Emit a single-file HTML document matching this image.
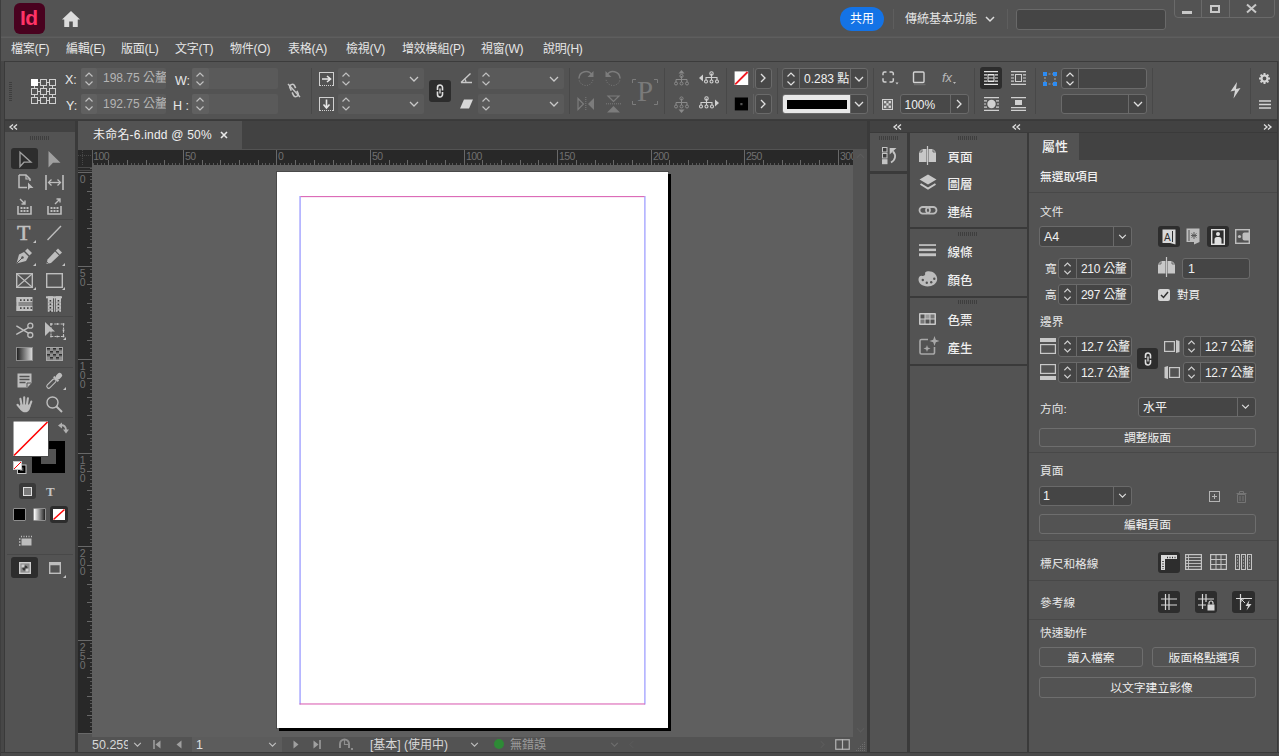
<!DOCTYPE html>
<html lang="zh-Hant"><head><meta charset="utf-8"><title>InDesign</title>
<style>
*{box-sizing:border-box;margin:0;padding:0}
html,body{width:1279px;height:756px;overflow:hidden;background:#535353}
body{position:relative;font-family:"Liberation Sans","Noto Sans CJK TC",sans-serif;font-size:12px;color:#e0e0e0}
.a{position:absolute}
.t{position:absolute;white-space:nowrap;line-height:1}
svg{position:absolute;overflow:visible}
.fld{position:absolute;background:#4a4a4a;border-radius:2px}
.fldb{position:absolute;background:#454545;border:1px solid #6a6a6a;border-radius:3px}
.btn{border:1px solid #6e6e6e;border-radius:3px;background:#535353;color:#f0f0f0;font-size:11.800px;text-align:center;line-height:1;display:flex;align-items:center;justify-content:center;white-space:nowrap;letter-spacing:0;padding-top:3px}
</style></head><body>
<!-- APPBAR -->
<div class="a" id="appbar" style="left:0;top:0;width:1279px;height:37px;background:#535353"></div>
<div class="a" style="left:0;top:36px;width:1279px;height:1px;background:#585858"></div><div class="a" style="left:0;top:37px;width:1279px;height:1px;background:#5e5e5e"></div>
<div class="a" id="logo" style="left:14px;top:3px;width:31px;height:31px;border-radius:6px;background:#49021f"></div>
<div class="t" style="left:20px;top:7px;font-size:21px;font-weight:bold;color:#ff3366;letter-spacing:-0.5px">Id</div>
<svg style="left:62px;top:11px" width="18" height="16" viewBox="0 0 20 16" preserveAspectRatio="none"><path d="M10 0 L0 8.5 L2.5 8.5 L2.5 16 L8 16 L8 10.5 L12 10.5 L12 16 L17.5 16 L17.5 8.5 L20 8.5 Z" fill="#dcdcdc"/></svg>
<div class="a" style="left:840px;top:7px;width:44px;height:24px;border-radius:12px;background:#1473e6"></div>
<div class="t" style="left:850px;top:13px;font-size:12px;color:#fff">共用</div>
<div class="a" style="left:893px;top:9px;width:1px;height:20px;background:#5e5e5e"></div>
<div class="t" style="left:905px;top:13px;font-size:12px;color:#e4e4e4">傳統基本功能</div>
<svg style="left:985px;top:16px" width="10" height="7" viewBox="0 0 10 7"><path d="M1 1 L5 5 L9 1" fill="none" stroke="#ddd" stroke-width="1.5"/></svg>
<div class="a" style="left:1007px;top:9px;width:1px;height:20px;background:#5e5e5e"></div>
<div class="a" style="left:1016px;top:9px;width:150px;height:21px;background:#454545;border:1px solid #696969;border-radius:3px"></div>
<div class="a" id="winbtn" style="left:1174px;top:-2px;width:101px;height:20px;border:1px solid #6a6a6a;border-radius:0 0 4px 4px;background:#535353"></div>
<div class="a" style="left:1201px;top:0;width:1px;height:18px;background:#6a6a6a"></div>
<div class="a" style="left:1229px;top:0;width:1px;height:18px;background:#6a6a6a"></div>
<div class="a" style="left:1182px;top:11px;width:10px;height:3px;background:#c8c8c8"></div>
<div class="a" style="left:1210px;top:5px;width:10px;height:8px;border:2px solid #c8c8c8"></div>
<svg style="left:1246px;top:4px" width="11" height="9" viewBox="0 0 11 9"><path d="M1 0.5 L10 8.5 M10 0.5 L1 8.5" stroke="#c8c8c8" stroke-width="2"/></svg>
<!-- MENUBAR -->
<div class="a" style="left:0;top:38px;width:1279px;height:23px;background:#535353"></div>
<div class="t" style="left:11px;top:43px;font-size:12px;letter-spacing:-0.200px;color:#e6e6e6">檔案(F)</div>
<div class="t" style="left:66px;top:43px;font-size:12px;letter-spacing:-0.200px;color:#e6e6e6">編輯(E)</div>
<div class="t" style="left:121px;top:43px;font-size:12px;letter-spacing:-0.200px;color:#e6e6e6">版面(L)</div>
<div class="t" style="left:175px;top:43px;font-size:12px;letter-spacing:-0.200px;color:#e6e6e6">文字(T)</div>
<div class="t" style="left:230px;top:43px;font-size:12px;letter-spacing:-0.200px;color:#e6e6e6">物件(O)</div>
<div class="t" style="left:288px;top:43px;font-size:12px;letter-spacing:-0.200px;color:#e6e6e6">表格(A)</div>
<div class="t" style="left:346px;top:43px;font-size:12px;letter-spacing:-0.200px;color:#e6e6e6">檢視(V)</div>
<div class="t" style="left:402px;top:43px;font-size:12px;letter-spacing:-0.200px;color:#e6e6e6">增效模組(P)</div>
<div class="t" style="left:481px;top:43px;font-size:12px;letter-spacing:-0.200px;color:#e6e6e6">視窗(W)</div>
<div class="t" style="left:543px;top:43px;font-size:12px;letter-spacing:-0.200px;color:#e6e6e6">說明(H)</div>
<svg width="0" height="0" style="position:absolute"><defs>
<symbol id="spin" viewBox="0 0 10 16"><path d="M1.5 5.5 L5 2 L8.5 5.5 M1.5 10.5 L5 14 L8.5 10.5" fill="none" stroke="currentColor" stroke-width="1.2"/></symbol>
<symbol id="chev" viewBox="0 0 10 6"><path d="M1 1 L5 5 L9 1" fill="none" stroke="currentColor" stroke-width="1.3"/></symbol>
<symbol id="chevr" viewBox="0 0 6 10"><path d="M1 1 L5 5 L1 9" fill="none" stroke="currentColor" stroke-width="1.3"/></symbol>
</defs></svg>
<div class="a" style="left:0;top:61px;width:1279px;height:59px;background:#3c3c3c"></div>
<div class="a" style="left:0;top:61px;width:5px;height:695px;background:#474747"></div>
<div class="a" style="left:4px;top:61px;width:1px;height:695px;background:#3a3a3a"></div>
<div class="a" style="left:5px;top:62px;width:1272px;height:57px;background:#535353"></div>
<div class="a" style="left:1278px;top:61px;width:1px;height:59px;background:#4a4a4a"></div>
<!-- grip -->
<div class="a" style="left:9px;top:82px;width:3px;height:19px;background:repeating-linear-gradient(#3e3e3e 0 1px,transparent 1px 2px)"></div>
<!-- ref point -->
<svg style="left:31px;top:79px;color:#cfcfcf" width="25" height="27" viewBox="0 0 25 27"><g fill="none" stroke="#cfcfcf" stroke-width="1"><path d="M3.5 3.5H21.5M3.5 12.5H21.5M3.5 21.5H21.5M3.5 3.5V21.5M12.5 3.5V21.5M21.5 3.5V21.5"/></g><g fill="#535353" stroke="#cfcfcf" stroke-width="1"><rect x="9.5" y="0.5" width="6" height="6"/><rect x="18.5" y="0.5" width="6" height="6"/><rect x="0.5" y="9.5" width="6" height="6"/><rect x="9.5" y="9.5" width="6" height="6"/><rect x="18.5" y="9.5" width="6" height="6"/><rect x="0.5" y="18.5" width="6" height="6"/><rect x="9.5" y="18.5" width="6" height="6"/><rect x="18.5" y="18.5" width="6" height="6"/></g><rect x="0" y="0" width="7" height="7" fill="#fff"/></svg>
<div class="t" style="left:65px;top:74px;font-size:12.5px;color:#e8e8e8">X:</div>
<div class="t" style="left:66px;top:100px;font-size:12.5px;color:#e8e8e8">Y:</div>
<div class="fld" style="left:81px;top:68px;width:85px;height:21px;background:#5a5a5a"></div>
<div class="fld" style="left:81px;top:68px;width:16px;height:21px;background:#606060"></div>
<svg style="left:84px;top:71px;color:#c0c0c0" width="10" height="16"><use href="#spin"/></svg>
<div class="a" style="left:97px;top:68px;width:69px;height:21px;overflow:hidden;border-radius:0 2px 2px 0"><div class="t" style="left:6px;top:4px;font-size:12px;color:#b4b4b4">198.75 公釐</div></div>
<div class="fld" style="left:81px;top:94px;width:85px;height:20px;background:#5a5a5a"></div>
<div class="fld" style="left:81px;top:94px;width:16px;height:20px;background:#606060"></div>
<svg style="left:84px;top:96px;color:#c0c0c0" width="10" height="16"><use href="#spin"/></svg>
<div class="a" style="left:97px;top:94px;width:69px;height:20px;overflow:hidden;border-radius:0 2px 2px 0"><div class="t" style="left:6px;top:4px;font-size:12px;color:#b4b4b4">192.75 公釐</div></div>
<div class="t" style="left:175px;top:75px;font-size:12.5px;color:#e8e8e8">W:</div>
<div class="t" style="left:173px;top:100px;font-size:12.5px;color:#e8e8e8">H :</div>
<div class="fld" style="left:192px;top:68px;width:86px;height:21px;background:#5a5a5a"></div>
<div class="fld" style="left:192px;top:68px;width:17px;height:21px;background:#606060"></div>
<svg style="left:195px;top:71px;color:#c0c0c0" width="10" height="16"><use href="#spin"/></svg>
<div class="fld" style="left:192px;top:94px;width:86px;height:20px;background:#5a5a5a"></div>
<div class="fld" style="left:192px;top:94px;width:17px;height:20px;background:#606060"></div>
<svg style="left:195px;top:96px;color:#c0c0c0" width="10" height="16"><use href="#spin"/></svg>
<!-- broken chain -->
<svg style="left:287px;top:82px" width="14" height="17" viewBox="0 0 14 17"><g fill="none" stroke="#c6c6c6" stroke-width="1.600" transform="rotate(-25 7 8.500)"><path d="M4.5 7.5 V4.5 a2.5 2.5 0 0 1 5 0 V7"/><path d="M4.5 9.5 V12.5 a2.5 2.5 0 0 0 5 0 V10"/></g><path d="M1 2 L13 15" stroke="#c6c6c6" stroke-width="1.4"/></svg>
<div class="a" style="left:311px;top:68px;width:1px;height:46px;background:#484848"></div>
<!-- x/y scale icons -->
<svg style="left:319px;top:72px" width="15" height="15" viewBox="0 0 15 15"><rect x="0.5" y="0.5" width="14" height="13" fill="none" stroke="#d0d0d0"/><path d="M2 13.5H13" stroke="#535353" stroke-dasharray="1 1"/><path d="M3 7H11M8 4L11.5 7L8 10" fill="none" stroke="#e8e8e8" stroke-width="1.6"/></svg>
<svg style="left:319px;top:97px" width="15" height="15" viewBox="0 0 15 15"><rect x="0.5" y="0.5" width="14" height="13" fill="none" stroke="#d0d0d0"/><path d="M2 13.5H13" stroke="#535353" stroke-dasharray="1 1"/><path d="M7.5 2.5V10.5M4.5 7.5L7.5 11L10.5 7.5" fill="none" stroke="#e8e8e8" stroke-width="1.6"/></svg>
<div class="fld" style="left:338px;top:68px;width:86px;height:21px;background:#5a5a5a"></div>
<svg style="left:341px;top:71px;color:#c0c0c0" width="10" height="16"><use href="#spin"/></svg>
<svg style="left:409px;top:76px;color:#c8c8c8" width="10" height="6"><use href="#chev"/></svg>
<div class="fld" style="left:338px;top:94px;width:86px;height:20px;background:#5a5a5a"></div>
<svg style="left:341px;top:96px;color:#c0c0c0" width="10" height="16"><use href="#spin"/></svg>
<svg style="left:409px;top:101px;color:#c8c8c8" width="10" height="6"><use href="#chev"/></svg>
<!-- chain btn -->
<div class="a" style="left:429px;top:80px;width:22px;height:22px;background:#2d2d2d;border-radius:3px"></div>
<svg style="left:436px;top:84px" width="8" height="14" viewBox="0 0 8 14"><g fill="none" stroke="#e0e0e0" stroke-width="1.6"><path d="M1.5 6 V3.5 a2.5 2.5 0 0 1 5 0 V6.5"/><path d="M1.5 7.5 V10.5 a2.5 2.5 0 0 0 5 0 V8"/><path d="M4 4.5V9.5" stroke-width="1.3"/></g></svg>
<!-- angle / shear -->
<svg style="left:460px;top:72px" width="13" height="12" viewBox="0 0 13 12"><path d="M1 10.5 H12 M1 10.5 L10.5 1.5" fill="none" stroke="#c8c8c8" stroke-width="1.4"/><path d="M6 10.5 A5 5 0 0 0 4.6 7" fill="none" stroke="#c8c8c8" stroke-width="1.2"/></svg>
<svg style="left:460px;top:99px" width="13" height="10" viewBox="0 0 13 10"><path d="M4 0.5 H13 L9 9.5 H0 Z" fill="#d8d8d8"/></svg>
<div class="fld" style="left:478px;top:68px;width:86px;height:21px;background:#5a5a5a"></div>
<svg style="left:481px;top:71px;color:#c0c0c0" width="10" height="16"><use href="#spin"/></svg>
<svg style="left:549px;top:76px;color:#c8c8c8" width="10" height="6"><use href="#chev"/></svg>
<div class="fld" style="left:478px;top:94px;width:86px;height:20px;background:#5a5a5a"></div>
<svg style="left:481px;top:96px;color:#c0c0c0" width="10" height="16"><use href="#spin"/></svg>
<svg style="left:549px;top:101px;color:#c8c8c8" width="10" height="6"><use href="#chev"/></svg>
<div class="a" style="left:569px;top:68px;width:1px;height:46px;background:#484848"></div>
<!-- rotate / flip (disabled) -->
<svg style="left:577px;top:69px" width="18" height="18" viewBox="0 0 18 18"><path d="M2 9 A7 7 0 0 1 15 6" fill="none" stroke="#7c7c7c" stroke-width="1.5"/><path d="M16.5 2 V8 H10.5 Z" fill="#7c7c7c"/><path d="M2 9 A7 7 0 0 0 16 10" fill="none" stroke="#7c7c7c" stroke-width="1" stroke-dasharray="1 1.5"/></svg>
<svg style="left:604px;top:69px" width="18" height="18" viewBox="0 0 18 18"><path d="M16 9 A7 7 0 0 0 3 6" fill="none" stroke="#7c7c7c" stroke-width="1.5"/><path d="M1.5 2 V8 H7.5 Z" fill="#7c7c7c"/><path d="M16 9 A7 7 0 0 1 2 10" fill="none" stroke="#7c7c7c" stroke-width="1" stroke-dasharray="1 1.5"/></svg>
<svg style="left:577px;top:97px" width="18" height="14" viewBox="0 0 18 14"><path d="M1 1.5 L6.5 7 L1 12.5 Z" fill="none" stroke="#7c7c7c" stroke-width="1.2"/><path d="M17 1 L11 7 L17 13 Z" fill="#7c7c7c"/><path d="M8.8 0 V14" stroke="#7c7c7c" stroke-width="1" stroke-dasharray="1 1"/></svg>
<svg style="left:606px;top:95px" width="15" height="18" viewBox="0 0 15 18"><path d="M2 1 L7.5 6.5 L13 1 Z" fill="none" stroke="#7c7c7c" stroke-width="1.2"/><path d="M1 17.5 L7.5 11 L14 17.5 Z" fill="#7c7c7c"/><path d="M0 8.8 H15" stroke="#7c7c7c" stroke-width="1" stroke-dasharray="1 1"/></svg>
<div class="t" style="left:637px;top:77px;font-family:'Liberation Serif',serif;font-size:29px;color:#7a7a7a">P</div>
<svg style="left:632px;top:79px" width="26" height="26" viewBox="0 0 26 26"><path d="M0.5 4V0.5H4M22 0.5H25.5V4M25.5 22V25.5H22M4 25.5H0.5V22" transform="translate(0,0)" fill="none" stroke="#7c7c7c" stroke-width="1"/></svg>
<div class="a" style="left:664px;top:68px;width:1px;height:46px;background:#484848"></div>
<!-- select container icons (disabled) -->
<svg style="left:674px;top:70px" width="15" height="17" viewBox="0 0 15 17"><g fill="none" stroke="#8a8a8a" stroke-width="1"><path d="M7.5 6V9M2 12V9.5H13V12"/><circle cx="7.5" cy="6" r="1.6"/><circle cx="2" cy="13.5" r="1.5"/><circle cx="7.5" cy="13.5" r="1.5"/><circle cx="13" cy="13.5" r="1.5"/><path d="M7.5 9V12"/></g><path d="M4.5 3.5 L7.5 0 L10.5 3.5Z" fill="#8a8a8a"/></svg>
<svg style="left:674px;top:96px" width="15" height="17" viewBox="0 0 15 17"><g fill="none" stroke="#8a8a8a" stroke-width="1"><path d="M7.5 2.5V6M2 9V6.5H13V9"/><circle cx="7.5" cy="2.5" r="1.6"/><circle cx="2" cy="10.5" r="1.5"/><circle cx="7.5" cy="10.5" r="1.5"/><circle cx="13" cy="10.5" r="1.5"/><path d="M7.5 6V9"/></g><path d="M4.5 13.5 L7.5 17 L10.5 13.5Z" fill="#8a8a8a"/></svg>
<svg style="left:699px;top:71px" width="20" height="15" viewBox="0 0 20 15"><g fill="none" stroke="#d0d0d0" stroke-width="1.1"><path d="M12.5 2.5V6M7 9V6.5H18V9"/><circle cx="12.500" cy="2.5" r="1.7"/><circle cx="7" cy="10.500" r="1.500"/><circle cx="12.5" cy="10.5" r="1.5"/><circle cx="18" cy="10.5" r="1.5"/><path d="M12.5 6V9"/></g><path d="M0 7 L4 3.500 V10.5Z" fill="#d0d0d0"/></svg>
<svg style="left:699px;top:96px" width="20" height="15" viewBox="0 0 20 15"><g fill="none" stroke="#d0d0d0" stroke-width="1.1"><path d="M7.5 2.5V6M2 9V6.5H13V9"/><circle cx="7.5" cy="2.500" r="1.700"/><circle cx="2" cy="10.5" r="1.5"/><circle cx="7.5" cy="10.5" r="1.500"/><circle cx="13" cy="10.500" r="1.5"/><path d="M7.5 6V9"/></g><path d="M20 7 L16 3.5 V10.5Z" fill="#d0d0d0"/></svg>
<div class="a" style="left:726px;top:68px;width:1px;height:46px;background:#484848"></div>
<!-- fill / stroke -->
<svg style="left:734px;top:71px" width="15" height="15" viewBox="0 0 15 15"><rect x="0.600" y="0.400" width="13.600" height="13.600" fill="#fff"/><path d="M1.200 13.400L13.600 1" stroke="#f01820" stroke-width="1.800"/></svg>
<svg style="left:734px;top:97px" width="15" height="15" viewBox="0 0 15 15"><rect x="0.800" y="0.500" width="13.200" height="12.900" fill="#000"/><rect x="6.300" y="6" width="2.200" height="2.200" fill="#555"/></svg>
<div class="a" style="left:753px;top:68px;width:1px;height:20px;background:#626262"></div>
<div class="a" style="left:753px;top:94px;width:1px;height:20px;background:#626262"></div>
<div class="a" style="left:755px;top:68px;width:17px;height:21px;background:#484848;border:1px solid #6a6a6a;border-radius:3px"></div>
<svg style="left:760px;top:73px;color:#e0e0e0" width="6" height="10"><use href="#chevr"/></svg>
<div class="a" style="left:755px;top:94px;width:17px;height:20px;background:#484848;border:1px solid #6a6a6a;border-radius:3px"></div>
<svg style="left:760px;top:99px;color:#e0e0e0" width="6" height="10"><use href="#chevr"/></svg>
<div class="a" style="left:777px;top:68px;width:1px;height:46px;background:#484848"></div>
<!-- stroke weight -->
<div class="a" style="left:782px;top:68px;width:86px;height:21px;background:#484848;border:1px solid #6a6a6a;border-radius:3px;overflow:hidden"><div class="a" style="left:16px;top:0;width:1px;height:19px;background:#6a6a6a"></div><div class="a" style="left:67px;top:0;width:1px;height:19px;background:#6a6a6a"></div><div class="a" style="left:17px;top:0;width:50px;height:19px;overflow:hidden"><div class="t" style="left:4px;top:4px;font-size:12px;color:#f0f0f0">0.283 點</div></div></div>
<svg style="left:786px;top:71px;color:#e0e0e0" width="10" height="16"><use href="#spin"/></svg>
<svg style="left:854px;top:76px;color:#e0e0e0" width="10" height="6"><use href="#chev"/></svg>
<!-- stroke style -->
<div class="a" style="left:782px;top:94px;width:86px;height:20px;background:#484848;border:1px solid #6a6a6a;border-radius:3px;overflow:hidden"><div class="a" style="left:0;top:0;width:67px;height:18px;background:#e8e8e8"></div><div class="a" style="left:4px;top:5px;width:60px;height:9px;background:#000"></div><div class="a" style="left:67px;top:0;width:1px;height:18px;background:#6a6a6a"></div></div>
<svg style="left:854px;top:101px;color:#e0e0e0" width="10" height="6"><use href="#chev"/></svg>
<div class="a" style="left:873px;top:68px;width:1px;height:46px;background:#484848"></div>
<!-- effects icons -->
<svg style="left:882px;top:71px" width="17" height="14" viewBox="0 0 17 14"><path d="M4.500 1H2.500A1.500 1.500 0 0 0 1 2.500V4.200M1 7.300V9.500A1.500 1.500 0 0 0 2.500 11H4.500M7.500 11H9.800A1.500 1.500 0 0 0 11.300 9.500V7.300M11.300 4.200V2.500A1.500 1.500 0 0 0 9.800 1H7.500" fill="none" stroke="#d0d0d0" stroke-width="1.500"/><path d="M13.500 11.500h3l-1.500 2z" fill="#d0d0d0"/></svg>
<svg style="left:912px;top:71px" width="14" height="15" viewBox="0 0 14 15"><rect x="1.500" y="1" width="10.500" height="10.500" rx="1" fill="none" stroke="#d4d4d4" stroke-width="1.400"/><path d="M2 13.500H13.500" stroke="#6a6a6a" stroke-width="1.500"/></svg>
<div class="t" style="left:942px;top:71px;font-size:13px;font-style:italic;color:#b8b8b8;font-family:'Liberation Sans',sans-serif">fx</div>
<svg style="left:953px;top:82px" width="3" height="2" viewBox="0 0 3 2"><path d="M0 0H3L1.500 2Z" fill="#b8b8b8"/></svg>
<svg style="left:882px;top:99px" width="11" height="11" viewBox="0 0 11 11"><rect x="0.5" y="0.5" width="10" height="10" fill="#6a6a6a" stroke="#cfcfcf"/><g fill="#d8d8d8"><rect x="2" y="2" width="2.300" height="2.300"/><rect x="6.600" y="2" width="2.300" height="2.300"/><rect x="4.300" y="4.300" width="2.300" height="2.300"/><rect x="2" y="6.600" width="2.300" height="2.300"/><rect x="6.600" y="6.600" width="2.300" height="2.300"/></g></svg>
<div class="a" style="left:900px;top:94px;width:69px;height:20px;background:#484848;border:1px solid #6a6a6a;border-radius:3px"><div class="a" style="left:49px;top:0;width:1px;height:18px;background:#6a6a6a"></div><div class="t" style="left:3.500px;top:4px;font-size:12px;color:#f0f0f0">100%</div></div>
<svg style="left:956px;top:99px;color:#e0e0e0" width="6" height="10"><use href="#chevr"/></svg>
<div class="a" style="left:974px;top:68px;width:1px;height:46px;background:#484848"></div>
<!-- text wrap icons -->
<div class="a" style="left:980px;top:67px;width:22px;height:22px;background:#2d2d2d;border-radius:3px"></div>
<svg style="left:984px;top:71px" width="14" height="14" viewBox="0 0 14 14"><g stroke="#e4e4e4" stroke-width="1.200"><path d="M0 0.600H14M0 3.800H14M0 7H14M0 10.200H14M0 13.400H14"/></g><rect x="3.500" y="3" width="7" height="8" fill="none" stroke="#2d2d2d" stroke-width="1"/><rect x="4" y="3.500" width="6" height="7" fill="none" stroke="#e4e4e4" stroke-width="1"/></svg>
<svg style="left:1011px;top:71px" width="15" height="14" viewBox="0 0 15 14"><g stroke="#d0d0d0" stroke-width="1.200"><path d="M0 0.600H15M0 13.400H15M0 3.800H3M0 7H3M0 10.200H3M12 3.800H15M12 7H15M12 10.200H15"/></g><rect x="4.500" y="3.500" width="6" height="7" fill="none" stroke="#d0d0d0" stroke-width="1"/></svg>
<svg style="left:984px;top:97px" width="15" height="14" viewBox="0 0 15 14"><g stroke="#d0d0d0" stroke-width="1.200"><path d="M0 0.600H15M0 13.400H15M0 3.800H3M0 7H2M0 10.200H3M12 3.800H15M13 7H15M12 10.200H15"/></g><circle cx="7.500" cy="7" r="4.200" fill="#d0d0d0"/></svg>
<svg style="left:1011px;top:97px" width="15" height="14" viewBox="0 0 15 14"><g stroke="#d0d0d0" stroke-width="1.200"><path d="M0 0.600H15M0 10.600H15M0 13.400H15"/></g><rect x="4" y="3" width="7" height="5" fill="#d0d0d0"/></svg>
<div class="a" style="left:1035px;top:68px;width:1px;height:46px;background:#484848"></div>
<!-- corner / blue icon -->
<svg style="left:1043px;top:72px" width="14" height="14" viewBox="0 0 14 14"><rect x="2" y="2" width="10" height="10" fill="none" stroke="#9a9a9a" stroke-width="1.200" stroke-dasharray="2 1.500"/><g fill="#2c8cf4"><rect width="4" height="4"/><rect x="10" width="4" height="4"/><rect y="10" width="4" height="4"/><rect x="10" y="10" width="4" height="4"/></g></svg>
<div class="a" style="left:1061px;top:68px;width:86px;height:21px;background:#454545;border:1px solid #6a6a6a;border-radius:3px"><div class="a" style="left:16px;top:0;width:1px;height:19px;background:#6a6a6a"></div></div>
<svg style="left:1065px;top:71px;color:#e0e0e0" width="10" height="16"><use href="#spin"/></svg>
<div class="a" style="left:1061px;top:94px;width:86px;height:20px;background:#454545;border:1px solid #6a6a6a;border-radius:3px"><div class="a" style="left:66px;top:0;width:1px;height:18px;background:#6a6a6a"></div></div>
<svg style="left:1133px;top:101px;color:#e0e0e0" width="10" height="6"><use href="#chev"/></svg>
<div class="a" style="left:1152px;top:68px;width:1px;height:46px;background:#484848"></div>
<svg style="left:1230px;top:82px" width="11" height="17" viewBox="0 0 11 17"><path d="M7 0 L0.500 9.500 L5 8.500 L3.500 16.500 L10.500 6 L6 7 Z" fill="#d4d4d4"/></svg>
<div class="a" style="left:1250px;top:68px;width:1px;height:46px;background:#484848"></div>
<svg style="left:1259px;top:73px" width="11" height="11" viewBox="0 0 11 11"><circle cx="5.500" cy="5.500" r="3" fill="none" stroke="#d4d4d4" stroke-width="2.200"/><g stroke="#d4d4d4" stroke-width="2"><path d="M5.500 0V2M5.500 9V11M0 5.500H2M9 5.500H11M1.600 1.600L3 3M8 8L9.400 9.400M1.600 9.400L3 8M8 3L9.400 1.600"/></g></svg>
<svg style="left:1259px;top:100px" width="12" height="9" viewBox="0 0 12 9"><path d="M0 1H12M0 4.500H12M0 8H12" stroke="#d4d4d4" stroke-width="1.400"/></svg>
<!-- TOOLS PANEL -->
<div class="a" style="left:5px;top:120px;width:71px;height:633px;background:#535353"></div>
<div class="a" style="left:5px;top:120px;width:71px;height:12px;background:#424242"></div>
<div class="a" style="left:5px;top:120px;width:71px;height:1px;background:#3a3a3a"></div>
<svg style="left:9px;top:124px" width="9" height="6" viewBox="0 0 9 6"><path d="M4 0.500L1 3L4 5.500M8 0.500L5 3L8 5.500" fill="none" stroke="#e0e0e0" stroke-width="1.300"/></svg>
<div class="a" style="left:30px;top:136px;width:20px;height:4px;background:repeating-linear-gradient(90deg,#3e3e3e 0 1px,transparent 1px 2px)"></div>
<!-- selection tools -->
<div class="a" style="left:11px;top:148px;width:27px;height:21px;background:#2d2d2d;border-radius:3px"></div>
<svg style="left:19px;top:151px" width="13" height="17" viewBox="0 0 13 17"><path d="M1 1.200V15.500L5 11.200H12Z" fill="none" stroke="#a0a0a0" stroke-width="1.300" stroke-linejoin="miter"/></svg>
<svg style="left:48px;top:151px" width="13" height="17" viewBox="0 0 13 17"><path d="M0.500 0V16.500L5 11.800H12.500Z" fill="#a0a0a0"/></svg>
<svg style="left:18px;top:174px" width="16" height="17" viewBox="0 0 16 17"><path d="M1 1H8L12 5V7M1 1V13.500H9" fill="none" stroke="#bdbdbd" stroke-width="1.500"/><path d="M8 1V5H12" fill="none" stroke="#bdbdbd" stroke-width="1.200"/><path d="M10 8.500V16L12 14H15.500Z" fill="#bdbdbd"/></svg>
<svg style="left:45px;top:175px" width="19" height="15" viewBox="0 0 19 15"><path d="M1 0V15M18 0V15" stroke="#bdbdbd" stroke-width="1.600"/><path d="M4 7.500H15" stroke="#bdbdbd" stroke-width="1.300"/><path d="M6.500 4.500L3.500 7.500L6.500 10.500M12.500 4.500L15.500 7.500L12.500 10.500" fill="none" stroke="#bdbdbd" stroke-width="1.300"/></svg>
<svg style="left:17px;top:198px" width="15" height="17" viewBox="0 0 15 17"><path d="M1 8V16H14V8" fill="none" stroke="#bdbdbd" stroke-width="1.600"/><g fill="#bdbdbd"><rect x="3.500" y="9" width="2" height="2"/><rect x="6.500" y="9" width="2" height="2"/><rect x="9.500" y="9" width="2" height="2"/><rect x="3.500" y="12" width="2" height="2"/><rect x="6.500" y="12" width="2" height="2"/><rect x="9.500" y="12" width="2" height="2"/></g><path d="M3 1L8 6M8 2.500V6H4.500" fill="none" stroke="#bdbdbd" stroke-width="1.400"/></svg>
<svg style="left:47px;top:198px" width="15" height="17" viewBox="0 0 15 17"><path d="M1 8V16H14V8" fill="none" stroke="#bdbdbd" stroke-width="1.600"/><g fill="#bdbdbd"><rect x="3.500" y="9" width="2" height="2"/><rect x="6.500" y="9" width="2" height="2"/><rect x="9.500" y="9" width="2" height="2"/><rect x="3.500" y="12" width="2" height="2"/><rect x="6.500" y="12" width="2" height="2"/><rect x="9.500" y="12" width="2" height="2"/></g><path d="M8 6L13 1M9.500 1H13V4.500" fill="none" stroke="#bdbdbd" stroke-width="1.400"/></svg>
<div class="a" style="left:7px;top:219px;width:66px;height:1px;background:#484848"></div>
<!-- type / line -->
<div class="t" style="left:17px;top:222px;font-family:'Liberation Serif',serif;font-size:22px;color:#c0c0c0;-webkit-text-stroke:0.500px #c0c0c0">T</div>
<svg style="left:33px;top:240px" width="3" height="3" viewBox="0 0 3 3"><path d="M3 0V3H0Z" fill="#c4c4c4"/></svg>
<svg style="left:47px;top:225px" width="15" height="16" viewBox="0 0 15 16"><path d="M0.500 15L14 1" stroke="#bdbdbd" stroke-width="1.400"/></svg>
<!-- pen / pencil -->
<svg style="left:16px;top:248px" width="17" height="17" viewBox="0 0 17 17"><path d="M11.500 0.500L16 5L13.500 7.500L9 3Z" fill="#bdbdbd"/><path d="M8 4L12.500 8.500L10 13L0.500 15.500L3 6.500Z" fill="#bdbdbd"/><path d="M0.500 15.500L6 10" stroke="#535353" stroke-width="1"/><circle cx="6.500" cy="9.500" r="1.200" fill="#535353"/></svg>
<svg style="left:33px;top:263px" width="3" height="3" viewBox="0 0 3 3"><path d="M3 0V3H0Z" fill="#c4c4c4"/></svg>
<svg style="left:46px;top:248px" width="17" height="17" viewBox="0 0 17 17"><path d="M12 0.500L16 4.500L13.800 6.700L9.800 2.700Z" fill="#bdbdbd"/><path d="M9 3.500L13 7.500L5 15L0.500 16L1.500 11.500Z" fill="#bdbdbd"/><path d="M1 14.200L2.500 15.600" stroke="#535353" stroke-width="1"/></svg>
<svg style="left:62px;top:263px" width="3" height="3" viewBox="0 0 3 3"><path d="M3 0V3H0Z" fill="#c4c4c4"/></svg>
<!-- frames -->
<svg style="left:16px;top:273px" width="17" height="15" viewBox="0 0 17 15"><rect x="0.700" y="0.700" width="15.600" height="13.600" fill="none" stroke="#bdbdbd" stroke-width="1.400"/><path d="M1 1L16 14M16 1L1 14" stroke="#bdbdbd" stroke-width="1.100"/></svg>
<svg style="left:33px;top:287px" width="3" height="3" viewBox="0 0 3 3"><path d="M3 0V3H0Z" fill="#c4c4c4"/></svg>
<svg style="left:46px;top:273px" width="17" height="15" viewBox="0 0 17 15"><rect x="0.700" y="0.700" width="15.600" height="13.600" fill="none" stroke="#bdbdbd" stroke-width="1.400"/></svg>
<svg style="left:62px;top:287px" width="3" height="3" viewBox="0 0 3 3"><path d="M3 0V3H0Z" fill="#c4c4c4"/></svg>
<!-- grids -->
<svg style="left:16px;top:297px" width="17" height="14" viewBox="0 0 17 14"><g fill="#c0c0c0"><rect x="0.500" y="0" width="16" height="5.500"/><rect x="0.500" y="8.500" width="16" height="5.500"/><rect x="0.500" y="0" width="2" height="14"/><rect x="0.500" y="6.500" width="16" height="1"/></g><g fill="#3c3c3c"><rect x="4" y="2.3" width="1.600" height="1.600"/><rect x="7.5" y="2.3" width="1.600" height="1.600"/><rect x="11" y="2.3" width="1.600" height="1.600"/><rect x="14.5" y="2.3" width="1.600" height="1.600"/><rect x="4" y="10.3" width="1.600" height="1.600"/><rect x="7.5" y="10.3" width="1.600" height="1.600"/><rect x="11" y="10.3" width="1.600" height="1.600"/><rect x="14.5" y="10.3" width="1.600" height="1.600"/></g></svg>
<svg style="left:46px;top:296px" width="16" height="16" viewBox="0 0 16 16"><g fill="#c0c0c0"><rect x="0" y="0.300" width="16" height="2"/><rect x="1.800" y="0.300" width="5.200" height="15.500"/><rect x="9.800" y="0.300" width="5.200" height="15.500"/><rect x="8" y="2" width="0.900" height="13.800"/></g><g fill="#3c3c3c"><rect x="3.6" y="4" width="1.600" height="1.600"/><rect x="3.6" y="7.5" width="1.600" height="1.600"/><rect x="3.6" y="11" width="1.600" height="1.600"/><rect x="3.6" y="14.5" width="1.600" height="1.600"/><rect x="11.6" y="4" width="1.600" height="1.600"/><rect x="11.6" y="7.5" width="1.600" height="1.600"/><rect x="11.6" y="11" width="1.600" height="1.600"/><rect x="11.6" y="14.5" width="1.600" height="1.600"/></g><path d="M1.800 6.300H7M1.800 9.800H7M1.800 13.300H7M9.800 6.300H15M9.800 9.800H15M9.800 13.300H15" stroke="#8a8a8a" stroke-width="0.600"/></svg>
<div class="a" style="left:7px;top:316px;width:66px;height:1px;background:#484848"></div>
<!-- scissors / free transform -->
<svg style="left:16px;top:322px" width="18" height="17" viewBox="0 0 18 17"><path d="M0.800 4.200L12 10.800M0.800 12.200L12 5.800" stroke="#bdbdbd" stroke-width="1.500" stroke-linecap="round"/><circle cx="14.300" cy="3.700" r="2.500" fill="none" stroke="#bdbdbd" stroke-width="1.300"/><circle cx="14.300" cy="13" r="2.500" fill="none" stroke="#bdbdbd" stroke-width="1.300"/></svg>
<svg style="left:45px;top:322px" width="21" height="18" viewBox="0 0 21 18"><rect x="6" y="2" width="12.500" height="12.500" fill="none" stroke="#bdbdbd" stroke-width="1.100" stroke-dasharray="2 1.200"/><g fill="#c8c8c8"><rect x="5.200" y="1.200" width="1.600" height="1.600"/><rect x="11.500" y="1.200" width="1.600" height="1.600"/><rect x="17.700" y="1.200" width="1.600" height="1.600"/><rect x="17.700" y="7.500" width="1.600" height="1.600"/><rect x="17.700" y="13.700" width="1.600" height="1.600"/><rect x="11.500" y="13.700" width="1.600" height="1.600"/><rect x="5.200" y="13.700" width="1.600" height="1.600"/></g><path d="M0 0V14L4.500 9.500H10Z" fill="#bdbdbd"/><path d="M21 15V18H18Z" fill="#c4c4c4"/></svg>
<!-- gradient / feather -->
<div class="a" style="left:16px;top:347px;width:17px;height:14px;border:1px solid #8e8e8e;background:linear-gradient(90deg,#222,#d8d8d8)"></div>
<svg style="left:46px;top:347px" width="17" height="14" viewBox="0 0 17 14"><defs><linearGradient id="gf" x1="0" y1="0" x2="0" y2="1"><stop offset="0" stop-color="#1c1c1c"/><stop offset="1" stop-color="#8a8a8a"/></linearGradient></defs><rect x="0.500" y="0.500" width="16" height="13" fill="#8e8e8e" stroke="#a8a8a8"/><g fill="url(#gf)"><rect x="1" y="1" width="3" height="3"/><rect x="7" y="1" width="3" height="3"/><rect x="13" y="1" width="3" height="3"/><rect x="4" y="4" width="3" height="3"/><rect x="10" y="4" width="3" height="3"/><rect x="1" y="7" width="3" height="3"/><rect x="7" y="7" width="3" height="3"/><rect x="13" y="7" width="3" height="3"/><rect x="4" y="10" width="3" height="3"/><rect x="10" y="10" width="3" height="3"/></g></svg>
<div class="a" style="left:7px;top:367px;width:66px;height:1px;background:#484848"></div>
<!-- note / eyedropper -->
<svg style="left:17px;top:373px" width="15" height="15" viewBox="0 0 15 15"><path d="M0.500 0.500H14.500V10L10.500 14.500H0.500Z" fill="#bdbdbd"/><path d="M2.500 3.500H12.500M2.500 6.500H12.500M2.500 9.500H8.500" stroke="#535353" stroke-width="1.300"/><path d="M10 14V10H14" fill="none" stroke="#535353" stroke-width="1"/></svg>
<svg style="left:46px;top:372px" width="17" height="18" viewBox="0 0 17 18"><g transform="translate(5.600,11.400) rotate(45)"><rect x="-1.900" y="-5.500" width="3.800" height="11.500" rx="1.900" fill="none" stroke="#bdbdbd" stroke-width="1.100"/><rect x="-3.300" y="-7.300" width="6.600" height="2" fill="#bdbdbd"/><rect x="-2.500" y="-13.800" width="5" height="7" rx="2.300" fill="#bdbdbd"/></g></svg>
<svg style="left:63px;top:387px" width="3" height="3" viewBox="0 0 3 3"><path d="M3 0V3H0Z" fill="#c4c4c4"/></svg>
<!-- hand / zoom -->
<svg style="left:16px;top:396px" width="17" height="17" viewBox="16 396 17 17"><g stroke="#bdbdbd" stroke-width="2.100" stroke-linecap="round" fill="none"><path d="M21.600 405L20.400 398.800M24.200 404.500V397.300M26.900 405L27.900 398.200M29.300 407L31.300 401.600M21.500 409.500L17.500 404.800"/></g><path d="M20 404.500H30.300C30.800 409 28.800 412.300 25 412.300C21.500 412.300 20 409.500 20 404.500Z" fill="#bdbdbd"/></svg>
<svg style="left:46px;top:396px" width="17" height="17" viewBox="0 0 17 17"><circle cx="6.500" cy="6.500" r="5.500" fill="none" stroke="#bdbdbd" stroke-width="1.400"/><path d="M10.500 10.500L16 16" stroke="#bdbdbd" stroke-width="2"/></svg>
<div class="a" style="left:7px;top:417px;width:66px;height:1px;background:#484848"></div>
<!-- fill/stroke -->
<div class="a" style="left:32px;top:441px;width:33px;height:32px;background:#000"></div>
<div class="a" style="left:41px;top:449px;width:15px;height:15px;background:#535353"></div>
<svg style="left:13px;top:421px" width="36" height="36" viewBox="0 0 36 36"><rect width="36" height="36" fill="#4a4a4a"/><rect x="0.500" y="0.500" width="34.500" height="34.500" fill="#fff"/><path d="M1 34.500L34.500 1" stroke="#f00" stroke-width="1.600"/></svg>
<svg style="left:58px;top:422px" width="11" height="12" viewBox="0 0 11 12"><path d="M2.500 3.500C6 2.500 8 5 8 8" fill="none" stroke="#b0b0b0" stroke-width="1.800"/><path d="M0 3.500L4 0.500V6.500Z" fill="#b0b0b0"/><path d="M5 7.500H11L8 11.500Z" fill="#b0b0b0"/></svg>
<svg style="left:13px;top:461px" width="14" height="13" viewBox="0 0 14 13"><rect x="4.500" y="4" width="8.500" height="8.500" fill="#000" stroke="#c8c8c8" stroke-width="1"/><rect x="7" y="6.500" width="3.500" height="3.500" fill="#535353"/><rect x="0.500" y="0.500" width="8" height="8" fill="#fff" stroke="#c8c8c8"/><path d="M1 8L8 1" stroke="#f00" stroke-width="1"/></svg>
<!-- container / text -->
<div class="a" style="left:19px;top:483px;width:17px;height:16px;background:#3a3a3a;border-radius:3px"></div>
<div class="a" style="left:23px;top:487px;width:9px;height:9px;border:1px solid #e0e0e0;background:#7a7a7a"></div>
<div class="t" style="left:46px;top:485px;font-family:'Liberation Serif',serif;font-weight:bold;font-size:13px;color:#c4c4c4">T</div>
<!-- apply color row -->
<div class="a" style="left:13px;top:508px;width:13px;height:13px;background:#000;border:1px solid #8e8e8e;border-radius:1px"></div>
<div class="a" style="left:33px;top:508px;width:13px;height:13px;background:linear-gradient(90deg,#fff,#222);border:1px solid #8e8e8e;border-radius:1px"></div>
<div class="a" style="left:50px;top:506px;width:18px;height:17px;background:#2d2d2d;border-radius:3px"></div>
<svg style="left:53px;top:509px" width="12" height="11" viewBox="0 0 12 11"><rect width="12" height="11" fill="#fff"/><path d="M0.500 10.500L11.500 0.500" stroke="#f00" stroke-width="1.500"/></svg>
<!-- view options -->
<svg style="left:18px;top:535px" width="14" height="11" viewBox="0 0 14 11"><rect x="3.500" y="3.500" width="10" height="7" fill="#bdbdbd"/><path d="M3 1.500H14" stroke="#bdbdbd" stroke-width="1.500" stroke-dasharray="1 1.500"/><path d="M1 4H2.500M1 7H2.500M1 10H2.500" stroke="#bdbdbd" stroke-width="1.400"/></svg>
<div class="a" style="left:7px;top:554px;width:66px;height:1px;background:#484848"></div>
<div class="a" style="left:11px;top:557px;width:27px;height:21px;background:#2d2d2d;border-radius:3px"></div>
<svg style="left:19px;top:562px" width="12" height="12" viewBox="0 0 12 12"><rect x="0.700" y="0.700" width="10.600" height="10.600" fill="#8a8a8a" stroke="#cfcfcf" stroke-width="1.400"/><circle cx="6" cy="6" r="2.600" fill="#3a3a3a"/><rect x="2.500" y="2.500" width="3" height="3" fill="#cfcfcf"/><rect x="6.500" y="6.500" width="3" height="3" fill="#cfcfcf"/></svg>
<svg style="left:49px;top:562px" width="12" height="12" viewBox="0 0 12 12"><rect x="0.700" y="0.700" width="10.600" height="10.600" fill="none" stroke="#bdbdbd" stroke-width="1.400"/><path d="M0 2H12" stroke="#bdbdbd" stroke-width="2.500"/></svg>
<svg style="left:63px;top:575px" width="3" height="3" viewBox="0 0 3 3"><path d="M3 0V3H0Z" fill="#c4c4c4"/></svg>
<!-- DOC WINDOW -->
<div class="a" style="left:75px;top:120px;width:795px;height:633px;background:#3a3a3a"></div>
<div class="a" style="left:78px;top:121px;width:789px;height:29px;background:#424242"></div>
<div class="a" style="left:78px;top:121px;width:164px;height:29px;background:#535353"></div>
<div class="t" style="left:93px;top:129px;font-size:12px;color:#f0f0f0;letter-spacing:0.200px">未命名-6.indd @ 50%</div>
<svg style="left:220px;top:131px" width="8" height="8" viewBox="0 0 8 8"><path d="M1 1L7 7M7 1L1 7" stroke="#e8e8e8" stroke-width="1.600"/></svg>
<div class="a" style="left:78px;top:149px;width:789px;height:604px;background:#535353"></div>
<div class="a" style="left:92px;top:165px;width:761px;height:572px;background:#5f5f5f"></div>
<div class="a" style="left:78px;top:150px;width:775px;height:15px;background:#282828"></div>
<div class="a" style="left:78px;top:150px;width:14px;height:584px;background:#282828"></div>
<svg style="left:93px;top:149px" width="760" height="16" viewBox="93 149 760 16"><path d="M93.5 163V165M97.5 163V165M101.5 163V165M104.5 163V165M112.5 163V165M116.5 163V165M119.5 163V165M123.5 163V165M131.5 163V165M134.5 163V165M138.5 163V165M142.5 163V165M149.5 163V165M153.5 163V165M157.5 163V165M160.5 163V165M168.5 163V165M172.5 163V165M175.5 163V165M179.5 163V165M187.5 163V165M190.5 163V165M194.5 163V165M198.5 163V165M205.5 163V165M209.5 163V165M213.5 163V165M217.5 163V165M224.5 163V165M228.5 163V165M232.5 163V165M235.5 163V165M243.5 163V165M247.5 163V165M250.5 163V165M254.5 163V165M262.5 163V165M265.5 163V165M269.5 163V165M273.5 163V165M280.5 163V165M284.5 163V165M288.5 163V165M291.5 163V165M299.5 163V165M303.5 163V165M306.5 163V165M310.5 163V165M318.5 163V165M321.5 163V165M325.5 163V165M329.5 163V165M336.5 163V165M340.5 163V165M344.5 163V165M348.5 163V165M355.5 163V165M359.5 163V165M363.5 163V165M366.5 163V165M374.5 163V165M378.5 163V165M381.5 163V165M385.5 163V165M393.5 163V165M396.5 163V165M400.5 163V165M404.5 163V165M411.5 163V165M415.5 163V165M419.5 163V165M422.5 163V165M430.5 163V165M434.5 163V165M437.5 163V165M441.5 163V165M449.5 163V165M452.5 163V165M456.5 163V165M460.5 163V165M467.5 163V165M471.5 163V165M475.5 163V165M479.5 163V165M486.5 163V165M490.5 163V165M494.5 163V165M497.5 163V165M505.5 163V165M509.5 163V165M512.5 163V165M516.5 163V165M523.5 163V165M527.5 163V165M531.5 163V165M535.5 163V165M542.5 163V165M546.5 163V165M550.5 163V165M553.5 163V165M561.5 163V165M565.5 163V165M568.5 163V165M572.5 163V165M580.5 163V165M583.5 163V165M587.5 163V165M591.5 163V165M598.5 163V165M602.5 163V165M606.5 163V165M610.5 163V165M617.5 163V165M621.5 163V165M625.5 163V165M628.5 163V165M636.5 163V165M639.5 163V165M643.5 163V165M647.5 163V165M654.5 163V165M658.5 163V165M662.5 163V165M666.5 163V165M673.5 163V165M677.5 163V165M681.5 163V165M684.5 163V165M692.5 163V165M696.5 163V165M699.5 163V165M703.5 163V165M711.5 163V165M714.5 163V165M718.5 163V165M722.5 163V165M729.5 163V165M733.5 163V165M737.5 163V165M741.5 163V165M748.5 163V165M752.5 163V165M755.5 163V165M759.5 163V165M767.5 163V165M770.5 163V165M774.5 163V165M778.5 163V165M785.5 163V165M789.5 163V165M793.5 163V165M797.5 163V165M804.5 163V165M808.5 163V165M812.5 163V165M815.5 163V165M823.5 163V165M827.5 163V165M830.5 163V165M834.5 163V165M842.5 163V165M845.5 163V165M849.5 163V165M853.5 163V165" stroke="#585858" stroke-width="1"/><path d="M108.5 160V165M127.5 160V165M146.5 160V165M164.5 160V165M202.5 160V165M220.5 160V165M239.5 160V165M258.5 160V165M295.5 160V165M314.5 160V165M333.5 160V165M351.5 160V165M389.5 160V165M407.5 160V165M426.5 160V165M445.5 160V165M482.5 160V165M501.5 160V165M520.5 160V165M538.5 160V165M576.5 160V165M595.5 160V165M613.5 160V165M632.5 160V165M669.5 160V165M688.5 160V165M707.5 160V165M726.5 160V165M763.5 160V165M782.5 160V165M800.5 160V165M819.5 160V165" stroke="#686868" stroke-width="1"/><path d="M183.5 150V165M276.5 150V165M370.5 150V165M464.5 150V165M557.5 150V165M651.5 150V165M744.5 150V165M838.5 150V165" stroke="#686868" stroke-width="1"/><g font-family="Liberation Sans, sans-serif" font-size="10.500" fill="#707070" letter-spacing="-0.600"><text x="93.2" y="159.800">100</text><text x="185.0" y="159.800">50</text><text x="278.0" y="159.800">0</text><text x="372.0" y="159.800">50</text><text x="466.0" y="159.800">100</text><text x="559.0" y="159.800">150</text><text x="653.0" y="159.800">200</text><text x="746.0" y="159.800">250</text><text x="840.0" y="159.800">300</text></g></svg>
<svg style="left:78px;top:165px" width="14" height="569" viewBox="78 165 14 569"><path d="M90 168.5H92M90 176.5H92M90 179.5H92M90 183.5H92M90 187.5H92M90 194.5H92M90 198.5H92M90 202.5H92M90 206.5H92M90 213.5H92M90 217.5H92M90 221.5H92M90 224.5H92M90 232.5H92M90 236.5H92M90 239.5H92M90 243.5H92M90 251.5H92M90 254.5H92M90 258.5H92M90 262.5H92M90 269.5H92M90 273.5H92M90 277.5H92M90 281.5H92M90 288.5H92M90 292.5H92M90 295.5H92M90 299.5H92M90 307.5H92M90 310.5H92M90 314.5H92M90 318.5H92M90 325.5H92M90 329.5H92M90 333.5H92M90 337.5H92M90 344.5H92M90 348.5H92M90 352.5H92M90 355.5H92M90 363.5H92M90 367.5H92M90 370.5H92M90 374.5H92M90 382.5H92M90 385.5H92M90 389.5H92M90 393.5H92M90 400.5H92M90 404.5H92M90 408.5H92M90 411.5H92M90 419.5H92M90 423.5H92M90 426.5H92M90 430.5H92M90 438.5H92M90 441.5H92M90 445.5H92M90 449.5H92M90 456.5H92M90 460.5H92M90 464.5H92M90 468.5H92M90 475.5H92M90 479.5H92M90 483.5H92M90 486.5H92M90 494.5H92M90 498.5H92M90 501.5H92M90 505.5H92M90 513.5H92M90 516.5H92M90 520.5H92M90 524.5H92M90 531.5H92M90 535.5H92M90 539.5H92M90 542.5H92M90 550.5H92M90 554.5H92M90 557.5H92M90 561.5H92M90 569.5H92M90 572.5H92M90 576.5H92M90 580.5H92M90 587.5H92M90 591.5H92M90 595.5H92M90 599.5H92M90 606.5H92M90 610.5H92M90 614.5H92M90 617.5H92M90 625.5H92M90 629.5H92M90 632.5H92M90 636.5H92M90 643.5H92M90 647.5H92M90 651.5H92M90 655.5H92M90 662.5H92M90 666.5H92M90 670.5H92M90 673.5H92M90 681.5H92M90 685.5H92M90 688.5H92M90 692.5H92M90 700.5H92M90 703.5H92M90 707.5H92M90 711.5H92M90 718.5H92M90 722.5H92M90 726.5H92M90 730.5H92" stroke="#585858" stroke-width="1"/><path d="M87 191.5H92M87 209.5H92M87 228.5H92M87 247.5H92M87 284.5H92M87 303.5H92M87 322.5H92M87 340.5H92M87 378.5H92M87 397.5H92M87 415.5H92M87 434.5H92M87 471.5H92M87 490.5H92M87 509.5H92M87 527.5H92M87 565.5H92M87 584.5H92M87 602.5H92M87 621.5H92M87 658.5H92M87 677.5H92M87 696.5H92M87 715.5H92" stroke="#686868" stroke-width="1"/><path d="M78 172.5H92M78 266.5H92M78 359.5H92M78 453.5H92M78 546.5H92M78 640.5H92M78 733.5H92" stroke="#686868" stroke-width="1"/><g font-family="Liberation Sans, sans-serif" font-size="10.500" fill="#707070" letter-spacing="-0.600"><text x="79.800" y="182.8">0</text><text x="79.800" y="276.8">5</text><text x="79.800" y="286.0">0</text><text x="79.800" y="369.8">1</text><text x="79.800" y="379.0">0</text><text x="79.800" y="388.2">0</text><text x="79.800" y="463.8">1</text><text x="79.800" y="473.0">5</text><text x="79.800" y="482.2">0</text><text x="79.800" y="556.8">2</text><text x="79.800" y="566.0">0</text><text x="79.800" y="575.2">0</text><text x="79.800" y="650.8">2</text><text x="79.800" y="660.0">5</text><text x="79.800" y="669.2">0</text></g></svg>
<div class="a" style="left:78px;top:167px;width:14px;height:1px;background:#484848"></div><div class="a" style="left:78px;top:170px;width:14px;height:1px;background:#484848"></div>
<div class="a" style="left:78px;top:150px;width:14px;height:15px;background:#282828"></div>
<svg style="left:78px;top:150px" width="15" height="15" viewBox="0 0 15 15"><path d="M4.500 0V15M0 5.500H14" stroke="#484848" stroke-width="1" stroke-dasharray="1 1"/><path d="M14.500 0V15" stroke="#606060" stroke-width="1"/></svg>
<div class="a" style="left:279px;top:174px;width:391.500px;height:556.500px;background:#000"></div>
<div class="a" style="left:277px;top:172px;width:391px;height:556px;background:#fff"></div>
<svg style="left:277px;top:172px" width="391" height="556" viewBox="277 172 391 556"><rect x="299.200" y="196" width="1.800" height="508.500" fill="#b6b6ff"/><rect x="644" y="196" width="1.700" height="508.500" fill="#b6b6ff"/><rect x="300.500" y="196" width="344" height="1.150" fill="#dc6cb8"/><rect x="299.500" y="703.400" width="345.500" height="1.150" fill="#dc6cb8"/></svg>
<div class="a" style="left:276px;top:171px;width:393px;height:1px;background:#4a4a4a"></div>
<div class="a" style="left:276px;top:171px;width:1px;height:558px;background:#4a4a4a"></div>
<div class="a" style="left:853px;top:149px;width:14px;height:588px;background:#535353"></div>
<svg style="left:856px;top:153px;color:#5b5b5b" width="9" height="6" viewBox="0 0 10 6"><path d="M1 5L5 1L9 5" fill="none" stroke="currentColor" stroke-width="1.2"/></svg>
<svg style="left:856px;top:727px;color:#5b5b5b" width="9" height="6"><use href="#chev"/></svg>
<div class="a" style="left:78px;top:737px;width:789px;height:16px;background:#535353"></div>
<div class="a" style="left:92px;top:737px;width:36px;height:16px;overflow:hidden"><div class="t" style="left:0;top:2px;font-size:12.500px;color:#d8d8d8">50.259%</div></div>
<svg style="left:133px;top:742px;color:#c0c0c0" width="9" height="5"><use href="#chev"/></svg>
<svg style="left:153px;top:740px" width="8" height="9" viewBox="0 0 8 9"><path d="M1 0V9" stroke="#a0a0a0" stroke-width="1.500"/><path d="M7.500 0.500V8.500L2.500 4.500Z" fill="#a0a0a0"/></svg>
<svg style="left:176px;top:740px" width="6" height="9" viewBox="0 0 6 9"><path d="M5.500 0.500V8.500L0.500 4.500Z" fill="#a0a0a0"/></svg>
<div class="a" style="left:192px;top:737px;width:90px;height:16px;background:#5c5c5c"></div>
<div class="t" style="left:196px;top:739px;font-size:12.500px;color:#e0e0e0">1</div>
<svg style="left:268px;top:742px;color:#c0c0c0" width="9" height="5"><use href="#chev"/></svg>
<svg style="left:293px;top:740px" width="6" height="9" viewBox="0 0 6 9"><path d="M0.500 0.500V8.500L5.500 4.500Z" fill="#a0a0a0"/></svg>
<svg style="left:313px;top:740px" width="8" height="9" viewBox="0 0 8 9"><path d="M7 0V9" stroke="#a0a0a0" stroke-width="1.500"/><path d="M0.500 0.500V8.500L5.500 4.500Z" fill="#a0a0a0"/></svg>
<svg style="left:338px;top:738px" width="16" height="13" viewBox="0 0 16 13"><path d="M2 10V6A4.500 4.500 0 0 1 11 6V10" fill="none" stroke="#8e8e8e" stroke-width="2"/><path d="M6.500 2V6.500H10" fill="none" stroke="#8e8e8e" stroke-width="1.200"/><rect x="13" y="10" width="2" height="2" fill="#8e8e8e"/></svg>
<div class="t" style="left:370px;top:739px;font-size:12px;color:#d8d8d8">[基本] (使用中)</div>
<svg style="left:470px;top:742px;color:#c0c0c0" width="9" height="5"><use href="#chev"/></svg>
<div class="a" style="left:494px;top:739px;width:10px;height:10px;border-radius:5px;background:#2e8a36"></div>
<div class="t" style="left:510px;top:739px;font-size:12px;color:#9c9c9c">無錯誤</div>
<svg style="left:610px;top:742px;color:#6e6e6e" width="9" height="5"><use href="#chev"/></svg>
<svg style="left:629px;top:740px;color:#5b5b5b" width="5" height="9" viewBox="0 0 6 10"><path d="M5 1L1 5L5 9" fill="none" stroke="currentColor" stroke-width="1.2"/></svg>
<svg style="left:820px;top:740px;color:#5b5b5b" width="5" height="9"><use href="#chevr"/></svg>
<svg style="left:835px;top:739px" width="15" height="11" viewBox="0 0 15 11"><rect x="0.750" y="0.750" width="13.500" height="9.500" fill="none" stroke="#b4b4b4" stroke-width="1.200"/><path d="M7.500 0V11" stroke="#b4b4b4" stroke-width="1.200"/></svg>
<svg style="left:856px;top:742px" width="10" height="10" viewBox="0 0 10 10"><g fill="#6e6e6e"><rect x="8" y="0" width="1" height="1"/><rect x="6" y="2" width="1" height="1"/><rect x="8" y="2" width="1" height="1"/><rect x="4" y="4" width="1" height="1"/><rect x="6" y="4" width="1" height="1"/><rect x="8" y="4" width="1" height="1"/><rect x="2" y="6" width="1" height="1"/><rect x="4" y="6" width="1" height="1"/><rect x="6" y="6" width="1" height="1"/><rect x="8" y="6" width="1" height="1"/><rect x="0" y="8" width="1" height="1"/><rect x="2" y="8" width="1" height="1"/><rect x="4" y="8" width="1" height="1"/><rect x="6" y="8" width="1" height="1"/><rect x="8" y="8" width="1" height="1"/></g></svg>
<!-- DOCKS -->
<div class="a" style="left:867px;top:120px;width:412px;height:633px;background:#3a3a3a"></div>
<div class="a" style="left:870px;top:121px;width:407px;height:11px;background:#424242"></div>
<svg style="left:893px;top:124px" width="9" height="6" viewBox="0 0 9 6"><path d="M4 0.500L1 3L4 5.500M8 0.500L5 3L8 5.500" fill="none" stroke="#e0e0e0" stroke-width="1.300"/></svg>
<svg style="left:1012px;top:124px" width="9" height="6" viewBox="0 0 9 6"><path d="M4 0.500L1 3L4 5.500M8 0.500L5 3L8 5.500" fill="none" stroke="#e0e0e0" stroke-width="1.300"/></svg>
<svg style="left:1263px;top:124px" width="9" height="6" viewBox="0 0 9 6"><path d="M1 0.500L4 3L1 5.500M5 0.500L8 3L5 5.500" fill="none" stroke="#e0e0e0" stroke-width="1.300"/></svg>
<!-- dock 1 -->
<div class="a" style="left:870px;top:133px;width:37px;height:38px;background:#535353"></div>
<div class="a" style="left:870px;top:174px;width:37px;height:579px;background:#535353"></div>
<div class="a" style="left:879px;top:136px;width:20px;height:4px;background:repeating-linear-gradient(90deg,#3e3e3e 0 1px,transparent 1px 2px)"></div>
<svg style="left:882px;top:147px" width="16" height="18" viewBox="0 0 16 18"><rect x="0.500" y="0.500" width="4.500" height="4.500" fill="#3e3e3e" stroke="#c4c4c4"/><rect x="0.500" y="6.500" width="4.500" height="4.500" fill="#3e3e3e" stroke="#c4c4c4"/><rect x="0" y="12.200" width="5.500" height="5" fill="#c4c4c4"/><path d="M11 4.500C14.500 8 13.500 13 9 15.500" fill="none" stroke="#c4c4c4" stroke-width="1.800"/><path d="M7.700 1H14.500L7.700 7.500Z" fill="#c4c4c4"/></svg>
<!-- dock 2 -->
<div class="a" style="left:910px;top:133px;width:117px;height:94px;background:#535353"></div>
<div class="a" style="left:910px;top:229px;width:117px;height:67px;background:#535353"></div>
<div class="a" style="left:910px;top:298px;width:117px;height:66px;background:#535353"></div>
<div class="a" style="left:910px;top:366px;width:117px;height:387px;background:#535353"></div>
<div class="a" style="left:958px;top:136px;width:20px;height:4px;background:repeating-linear-gradient(90deg,#3e3e3e 0 1px,transparent 1px 2px)"></div>
<div class="a" style="left:958px;top:232px;width:20px;height:4px;background:repeating-linear-gradient(90deg,#3e3e3e 0 1px,transparent 1px 2px)"></div>
<div class="a" style="left:958px;top:300px;width:20px;height:4px;background:repeating-linear-gradient(90deg,#3e3e3e 0 1px,transparent 1px 2px)"></div>
<!-- pages -->
<svg style="left:918px;top:146px" width="19" height="19" viewBox="0 0 19 19"><path d="M1 6L4 3H8.500V16H1Z" fill="#c8c8c8"/><path d="M18 6L15 3H10.500V16H18Z" fill="#c8c8c8"/><path d="M1 6H4V3M18 6H15V3" fill="none" stroke="#535353" stroke-width="0.800"/><path d="M9.500 0V19" stroke="#c8c8c8" stroke-width="1.200"/></svg>
<div class="t" style="left:947.5px;top:152px;font-size:12.5px;color:#eeeeee;font-weight:500">頁面</div>
<!-- layers -->
<svg style="left:919px;top:174px" width="18" height="17" viewBox="0 0 18 17"><path d="M9 0.500L17.500 5.500L9 10.500L0.500 5.500Z" fill="#c8c8c8"/><path d="M1.500 10L9 14.500L16.500 10" fill="none" stroke="#c8c8c8" stroke-width="2"/></svg>
<div class="t" style="left:947.5px;top:179px;font-size:12.5px;color:#eeeeee;font-weight:500">圖層</div>
<!-- links -->
<svg style="left:918px;top:206px" width="20" height="9" viewBox="0 0 20 9"><rect x="1.500" y="1" width="10.500" height="6.600" rx="3.300" fill="none" stroke="#bcbcbc" stroke-width="1.800"/><rect x="8" y="1" width="10.500" height="6.600" rx="3.300" fill="none" stroke="#bcbcbc" stroke-width="1.800"/></svg>
<div class="t" style="left:947.5px;top:207px;font-size:12.5px;color:#eeeeee;font-weight:500">連結</div>
<!-- stroke -->
<svg style="left:919px;top:244px" width="17" height="13" viewBox="0 0 17 13"><rect x="0" y="0.200" width="17" height="1.700" fill="#c4c4c4"/><rect x="0" y="4.600" width="17" height="2.500" fill="#c4c4c4"/><rect x="0" y="9.300" width="17" height="2.900" fill="#c4c4c4"/></svg>
<div class="t" style="left:947.5px;top:247px;font-size:12.5px;color:#eeeeee;font-weight:500">線條</div>
<!-- color -->
<svg style="left:918px;top:270px" width="20" height="17" viewBox="918 270 20 17"><path d="M928 271.300C933 270.900 937.200 274.500 937.200 279C937.200 283.500 932.500 286.400 927.500 286.400C922.500 286.400 918.500 283.600 918.500 279.600C918.500 277 920 275.600 922 275.900C924 276.200 925.600 275.200 925.100 273.600C924.700 272.300 926 271.500 928 271.300Z" fill="#bcbcbc"/><g fill="#535353"><circle cx="922.800" cy="280" r="1.200"/><circle cx="926.800" cy="282.800" r="1.200"/><circle cx="931.200" cy="282.300" r="1.200"/><circle cx="934.300" cy="278.800" r="1.200"/></g></svg>
<div class="t" style="left:947.5px;top:275px;font-size:12.5px;color:#eeeeee;font-weight:500">顏色</div>
<!-- swatches -->
<svg style="left:919px;top:313px" width="17" height="12" viewBox="0 0 17 12"><rect width="17" height="12" rx="1" fill="#c8c8c8"/><g fill="#535353"><rect x="1.500" y="1.500" width="4" height="4"/><rect x="6.500" y="6.500" width="4" height="4"/><rect x="11.500" y="1.500" width="4" height="4" fill="#777"/><rect x="1.500" y="6.500" width="4" height="4" fill="#777"/><rect x="11.500" y="6.500" width="4" height="4"/><rect x="6.500" y="1.500" width="4" height="4" fill="#999"/></g></svg>
<div class="t" style="left:947.5px;top:315px;font-size:12.5px;color:#eeeeee;font-weight:500">色票</div>
<!-- generate -->
<svg style="left:919px;top:336px" width="21" height="19" viewBox="0 0 21 19"><path d="M9 3.500H2.500A1.500 1.500 0 0 0 1 5V16.500A1.500 1.500 0 0 0 2.500 18H14A1.500 1.500 0 0 0 15.500 16.500V11" fill="none" stroke="#a8a8a8" stroke-width="1.600"/><path d="M15.500 0L16.800 3.700L20.500 5L16.800 6.300L15.500 10L14.200 6.300L10.500 5L14.200 3.700Z" fill="#a8a8a8"/><path d="M8 9L8.900 11.600L11.500 12.500L8.900 13.400L8 16L7.100 13.400L4.500 12.500L7.100 11.600Z" fill="#a8a8a8"/></svg>
<div class="t" style="left:947.5px;top:343px;font-size:12.5px;color:#eeeeee;font-weight:500">產生</div>
<!-- PROPERTIES PANEL -->
<div class="a" style="left:1029px;top:133px;width:248px;height:620px;background:#535353"></div>
<div class="a" style="left:1029px;top:133px;width:248px;height:27px;background:#424242"></div>
<div class="a" style="left:1029px;top:133px;width:50px;height:27px;background:#535353"></div>
<div class="a" style="left:1278px;top:120px;width:1px;height:636px;background:#4c4c4c"></div>
<div class="t" style="left:1042px;top:140px;font-size:13px;color:#f4f4f4;font-weight:500">屬性</div>
<div class="t" style="left:1040px;top:171px;font-size:11.700px;color:#f0f0f0;font-weight:500">無選取項目</div>
<div class="a" style="left:1029px;top:192px;width:248px;height:1px;background:#484848"></div>
<div class="t" style="left:1040px;top:206px;font-size:11.700px;color:#e6e6e6">文件</div>
<div class="fldb" style="left:1039px;top:226px;width:93px;height:21px"><div class="a" style="left:73px;top:0;width:1px;height:19px;background:#6a6a6a"></div><div class="t" style="left:4px;top:4px;font-size:12.500px;color:#f0f0f0">A4</div></div>
<svg style="left:1118px;top:234px;color:#e0e0e0" width="9" height="5"><use href="#chev"/></svg>
<!-- doc icon buttons -->
<div class="a" style="left:1158px;top:226px;width:22px;height:21px;background:#2d2d2d;border-radius:3px"></div>
<svg style="left:1162px;top:229px" width="14" height="16" viewBox="0 0 14 16"><path d="M0.500 0.500H13.500V15.500L8 14H0.500Z" fill="#d8d8d8"/><path d="M10.500 2V13" stroke="#2d2d2d" stroke-width="1"/><text x="2" y="11.500" font-family="Liberation Sans, sans-serif" font-size="10" fill="#2d2d2d">A</text></svg>
<svg style="left:1186px;top:228px" width="14" height="17" viewBox="0 0 14 17"><path d="M0.500 0.500H13.500V14L8 16.500V14H0.500Z" fill="#bdbdbd"/><path d="M3 2V13" stroke="#535353" stroke-width="1"/><path d="M8 4V11M5.500 5.500L10.500 9.500M10.500 5.500L5.500 9.500M5 7.500H11" stroke="#535353" stroke-width="0.900"/></svg>
<div class="a" style="left:1207px;top:226px;width:22px;height:21px;background:#2d2d2d;border-radius:3px"></div>
<svg style="left:1211px;top:229px" width="14" height="16" viewBox="0 0 14 16"><rect x="0.700" y="0.700" width="12.600" height="14.600" fill="#2d2d2d" stroke="#e0e0e0" stroke-width="1.400"/><circle cx="7" cy="5" r="2" fill="#e0e0e0"/><path d="M3.500 15V10.500A2.500 2.500 0 0 1 6 8H8A2.500 2.500 0 0 1 10.500 10.500V15Z" fill="#e0e0e0"/></svg>
<svg style="left:1235px;top:228px" width="15" height="17" viewBox="0 0 15 17"><rect x="0.700" y="1.700" width="13.600" height="13.600" fill="none" stroke="#bdbdbd" stroke-width="1.400"/><circle cx="4.500" cy="8.500" r="1.600" fill="#bdbdbd"/><path d="M14 4.500H9.500A2 2 0 0 0 7.500 6.500V10.500A2 2 0 0 0 9.500 12.500H14Z" fill="#bdbdbd"/></svg>
<!-- W/H -->
<div class="t" style="left:1045px;top:263px;font-size:11.700px;color:#e6e6e6">寬</div>
<div class="fldb" style="left:1058px;top:258px;width:74px;height:21px;overflow:hidden"><div class="a" style="left:17px;top:0;width:1px;height:19px;background:#6a6a6a"></div><div class="t" style="left:22px;top:4px;font-size:12px;letter-spacing:-0.300px;color:#f0f0f0">210 公釐</div></div>
<svg style="left:1063px;top:261px;color:#d0d0d0" width="9" height="15"><use href="#spin"/></svg>
<div class="t" style="left:1045px;top:289px;font-size:11.700px;color:#e6e6e6">高</div>
<div class="fldb" style="left:1058px;top:284px;width:74px;height:21px;overflow:hidden"><div class="a" style="left:17px;top:0;width:1px;height:19px;background:#6a6a6a"></div><div class="t" style="left:22px;top:4px;font-size:12px;letter-spacing:-0.300px;color:#f0f0f0">297 公釐</div></div>
<svg style="left:1063px;top:287px;color:#d0d0d0" width="9" height="15"><use href="#spin"/></svg>
<!-- pages count -->
<svg style="left:1157px;top:257px" width="19" height="20" viewBox="0 0 19 20"><path d="M1 7L4 4H8.500V16.500H1Z" fill="#c8c8c8"/><path d="M18 7L15 4H10.500V16.500H18Z" fill="#c8c8c8"/><path d="M1 7H4V4M18 7H15V4" fill="none" stroke="#535353" stroke-width="0.800"/><path d="M9.500 0V20" stroke="#c8c8c8" stroke-width="1.200"/></svg>
<div class="fldb" style="left:1182px;top:258px;width:68px;height:21px"><div class="t" style="left:5px;top:4px;font-size:12.500px;color:#f0f0f0">1</div></div>
<div class="a" style="left:1158px;top:289px;width:12px;height:12px;background:#d4d4d4;border-radius:2px"></div>
<svg style="left:1160px;top:291px" width="9" height="8" viewBox="0 0 9 8"><path d="M1 4L3.500 6.500L8 1" fill="none" stroke="#303030" stroke-width="1.500"/></svg>
<div class="t" style="left:1177px;top:290px;font-size:11.500px;color:#f0f0f0">對頁</div>
<!-- margins -->
<div class="t" style="left:1040px;top:316px;font-size:11.700px;color:#e6e6e6">邊界</div>
<svg style="left:1040px;top:338px" width="16" height="16" viewBox="0 0 16 16"><rect x="0" y="0" width="16" height="4" fill="#c8c8c8"/><rect x="0.600" y="6.600" width="14.800" height="8.800" fill="none" stroke="#c8c8c8" stroke-width="1.200"/></svg>
<div class="fldb" style="left:1058px;top:336px;width:74px;height:21px;overflow:hidden"><div class="a" style="left:17px;top:0;width:1px;height:19px;background:#6a6a6a"></div><div class="t" style="left:22px;top:4px;font-size:12px;letter-spacing:-0.300px;color:#f0f0f0">12.7 公釐</div></div>
<svg style="left:1063px;top:339px;color:#d0d0d0" width="9" height="15"><use href="#spin"/></svg>
<svg style="left:1040px;top:364px" width="16" height="16" viewBox="0 0 16 16"><rect x="0" y="12" width="16" height="4" fill="#c8c8c8"/><rect x="0.600" y="0.600" width="14.800" height="8.800" fill="none" stroke="#c8c8c8" stroke-width="1.200"/></svg>
<div class="fldb" style="left:1058px;top:362px;width:74px;height:21px;overflow:hidden"><div class="a" style="left:17px;top:0;width:1px;height:19px;background:#6a6a6a"></div><div class="t" style="left:22px;top:4px;font-size:12px;letter-spacing:-0.300px;color:#f0f0f0">12.7 公釐</div></div>
<svg style="left:1063px;top:365px;color:#d0d0d0" width="9" height="15"><use href="#spin"/></svg>
<div class="a" style="left:1137px;top:348px;width:21px;height:21px;background:#2d2d2d;border-radius:3px"></div>
<svg style="left:1144px;top:352px" width="8" height="14" viewBox="0 0 8 14"><g fill="none" stroke="#e0e0e0" stroke-width="1.600"><path d="M1.500 6V3.500a2.500 2.500 0 0 1 5 0V6.500"/><path d="M1.500 7.500V10.500a2.500 2.500 0 0 0 5 0V8"/><path d="M4 4.500V9.500" stroke-width="1.300"/></g></svg>
<svg style="left:1164px;top:340px" width="16" height="13" viewBox="0 0 16 13"><rect x="0.600" y="1.600" width="9.800" height="9.800" fill="none" stroke="#c8c8c8" stroke-width="1.200"/><path d="M12 0L15.500 1V12L12 13Z" fill="#c8c8c8"/></svg>
<div class="fldb" style="left:1183px;top:336px;width:73px;height:21px;overflow:hidden"><div class="a" style="left:16px;top:0;width:1px;height:19px;background:#6a6a6a"></div><div class="t" style="left:21px;top:4px;font-size:12px;letter-spacing:-0.300px;color:#f0f0f0">12.7 公釐</div></div>
<svg style="left:1187px;top:339px;color:#d0d0d0" width="9" height="15"><use href="#spin"/></svg>
<svg style="left:1164px;top:366px" width="16" height="13" viewBox="0 0 16 13"><rect x="5.600" y="1.600" width="9.800" height="9.800" fill="none" stroke="#c8c8c8" stroke-width="1.200"/><path d="M4 0L0.500 1V12L4 13Z" fill="#c8c8c8"/></svg>
<div class="fldb" style="left:1183px;top:362px;width:73px;height:21px;overflow:hidden"><div class="a" style="left:16px;top:0;width:1px;height:19px;background:#6a6a6a"></div><div class="t" style="left:21px;top:4px;font-size:12px;letter-spacing:-0.300px;color:#f0f0f0">12.7 公釐</div></div>
<svg style="left:1187px;top:365px;color:#d0d0d0" width="9" height="15"><use href="#spin"/></svg>
<!-- orientation -->
<div class="t" style="left:1040px;top:403px;font-size:11.700px;color:#e6e6e6">方向:</div>
<div class="fldb" style="left:1138px;top:397px;width:118px;height:20px"><div class="a" style="left:98px;top:0;width:1px;height:18px;background:#6a6a6a"></div><div class="t" style="left:4px;top:4px;font-size:12px;color:#f0f0f0">水平</div></div>
<svg style="left:1241px;top:404px;color:#e0e0e0" width="9" height="5"><use href="#chev"/></svg>
<div class="a btn" style="left:1039px;top:428px;width:217px;height:19px">調整版面</div>
<div class="a" style="left:1029px;top:452px;width:248px;height:1px;background:#484848"></div>
<!-- pages -->
<div class="t" style="left:1040px;top:465px;font-size:11.700px;color:#e6e6e6">頁面</div>
<div class="fldb" style="left:1039px;top:486px;width:93px;height:20px"><div class="a" style="left:73px;top:0;width:1px;height:18px;background:#6a6a6a"></div><div class="t" style="left:3px;top:3px;font-size:12.500px;color:#f0f0f0">1</div></div>
<svg style="left:1118px;top:493px;color:#e0e0e0" width="9" height="5"><use href="#chev"/></svg>
<svg style="left:1209px;top:491px" width="11" height="11" viewBox="0 0 11 11"><rect x="0.500" y="0.500" width="10" height="10" fill="none" stroke="#b4b4b4"/><path d="M5.500 3V8M3 5.500H8" stroke="#b4b4b4" stroke-width="1"/></svg>
<svg style="left:1236px;top:491px" width="11" height="12" viewBox="0 0 11 12"><path d="M0.500 2.500H10.500M3.500 2V0.500H7.500V2" fill="none" stroke="#757575" stroke-width="1"/><path d="M1.500 3.500H9.500V11.500H1.500Z" fill="none" stroke="#757575"/><path d="M4 5V10M7 5V10" stroke="#757575"/></svg>
<div class="a btn" style="left:1039px;top:514px;width:217px;height:20px">編輯頁面</div>
<div class="a" style="left:1029px;top:540px;width:248px;height:1px;background:#484848"></div>
<!-- rulers & grids -->
<div class="t" style="left:1040px;top:558px;font-size:11.700px;color:#e6e6e6">標尺和格線</div>
<div class="a" style="left:1158px;top:552px;width:22px;height:21px;background:#2d2d2d;border-radius:3px"></div>
<svg style="left:1161px;top:555px" width="16" height="15" viewBox="0 0 16 15"><path d="M0 0H16V4H4V15H0Z" fill="#d8d8d8"/><path d="M6 2.500H15" stroke="#2d2d2d" stroke-width="1.500" stroke-dasharray="1 1.500"/><path d="M2 6V14" stroke="#2d2d2d" stroke-width="1.500" stroke-dasharray="1 1.500"/></svg>
<svg style="left:1185px;top:554px" width="17" height="16" viewBox="0 0 17 16"><rect x="0.600" y="0.600" width="15.800" height="14.800" fill="none" stroke="#c4c4c4" stroke-width="1.200"/><path d="M1 3.500H16M1 6.500H16M1 9.500H16M1 12.500H16M3.500 1V15" stroke="#c4c4c4" stroke-width="0.900"/></svg>
<svg style="left:1210px;top:554px" width="17" height="16" viewBox="0 0 17 16"><rect x="0.600" y="0.600" width="15.800" height="14.800" fill="none" stroke="#c4c4c4" stroke-width="1.200"/><path d="M1 5.500H16M1 10.500H16M6 1V15M11 1V15" stroke="#c4c4c4" stroke-width="1"/></svg>
<svg style="left:1235px;top:554px" width="17" height="16" viewBox="0 0 17 16"><g fill="none" stroke="#c4c4c4" stroke-width="1"><rect x="0.500" y="0.500" width="4" height="15"/><rect x="6.500" y="0.500" width="4" height="15"/><rect x="12.500" y="0.500" width="4" height="15"/></g><g fill="#c4c4c4"><rect x="2" y="2.5" width="1" height="1"/><rect x="2" y="5.5" width="1" height="1"/><rect x="2" y="8.5" width="1" height="1"/><rect x="2" y="11.5" width="1" height="1"/><rect x="8" y="2.5" width="1" height="1"/><rect x="8" y="5.5" width="1" height="1"/><rect x="8" y="8.5" width="1" height="1"/><rect x="8" y="11.5" width="1" height="1"/><rect x="14" y="2.5" width="1" height="1"/><rect x="14" y="5.5" width="1" height="1"/><rect x="14" y="8.5" width="1" height="1"/><rect x="14" y="11.5" width="1" height="1"/></g></svg>
<div class="a" style="left:1029px;top:580px;width:248px;height:1px;background:#484848"></div>
<!-- guides -->
<div class="t" style="left:1040px;top:597px;font-size:11.700px;color:#e6e6e6">參考線</div>
<div class="a" style="left:1158px;top:591px;width:22px;height:22px;background:#2d2d2d;border-radius:3px"></div>
<svg style="left:1161px;top:594px" width="16" height="16" viewBox="0 0 16 16"><path d="M4.500 0V16M8 0V16M0 5H16M0 11H16" stroke="#d8d8d8" stroke-width="1.200"/></svg>
<div class="a" style="left:1195px;top:591px;width:22px;height:22px;background:#2d2d2d;border-radius:3px"></div>
<svg style="left:1198px;top:594px" width="17" height="17" viewBox="0 0 17 17"><path d="M4.500 0V15M8 0V8M0 5H16M0 11H8" stroke="#d8d8d8" stroke-width="1.200"/><rect x="9.500" y="10.500" width="7" height="6" fill="#d8d8d8"/><path d="M11 10.500V9A2 2 0 0 1 15 9V10.500" fill="none" stroke="#d8d8d8" stroke-width="1.200"/></svg>
<div class="a" style="left:1232px;top:591px;width:23px;height:22px;background:#2d2d2d;border-radius:3px"></div>
<svg style="left:1236px;top:594px" width="17" height="17" viewBox="0 0 17 17"><path d="M4.500 0V16M0 4.500H16" stroke="#d8d8d8" stroke-width="1.200"/><path d="M5 5L9 9M5 5H8M5 5V8" stroke="#d8d8d8" stroke-width="1"/><path d="M13.500 6L9.500 12H12L10.500 16.500L15.500 10H12.500Z" fill="#d8d8d8"/></svg>
<div class="a" style="left:1029px;top:619px;width:248px;height:1px;background:#484848"></div>
<!-- quick actions -->
<div class="t" style="left:1040px;top:627px;font-size:11.700px;color:#e6e6e6">快速動作</div>
<div class="a btn" style="left:1039px;top:647px;width:104px;height:20px">讀入檔案</div>
<div class="a btn" style="left:1152px;top:647px;width:104px;height:20px">版面格點選項</div>
<div class="a btn" style="left:1039px;top:677px;width:217px;height:21px;padding-left:8px">以文字建立影像</div>
<div class="a" style="left:0;top:752px;width:1279px;height:1px;background:#3a3a3a"></div>
<div class="a" style="left:0;top:753px;width:1279px;height:3px;background:#4a4a4a"></div>
<div class="a" id="winborder" style="left:0;top:0;width:1px;height:756px;background:#3e3e3e"></div>
</body></html>
